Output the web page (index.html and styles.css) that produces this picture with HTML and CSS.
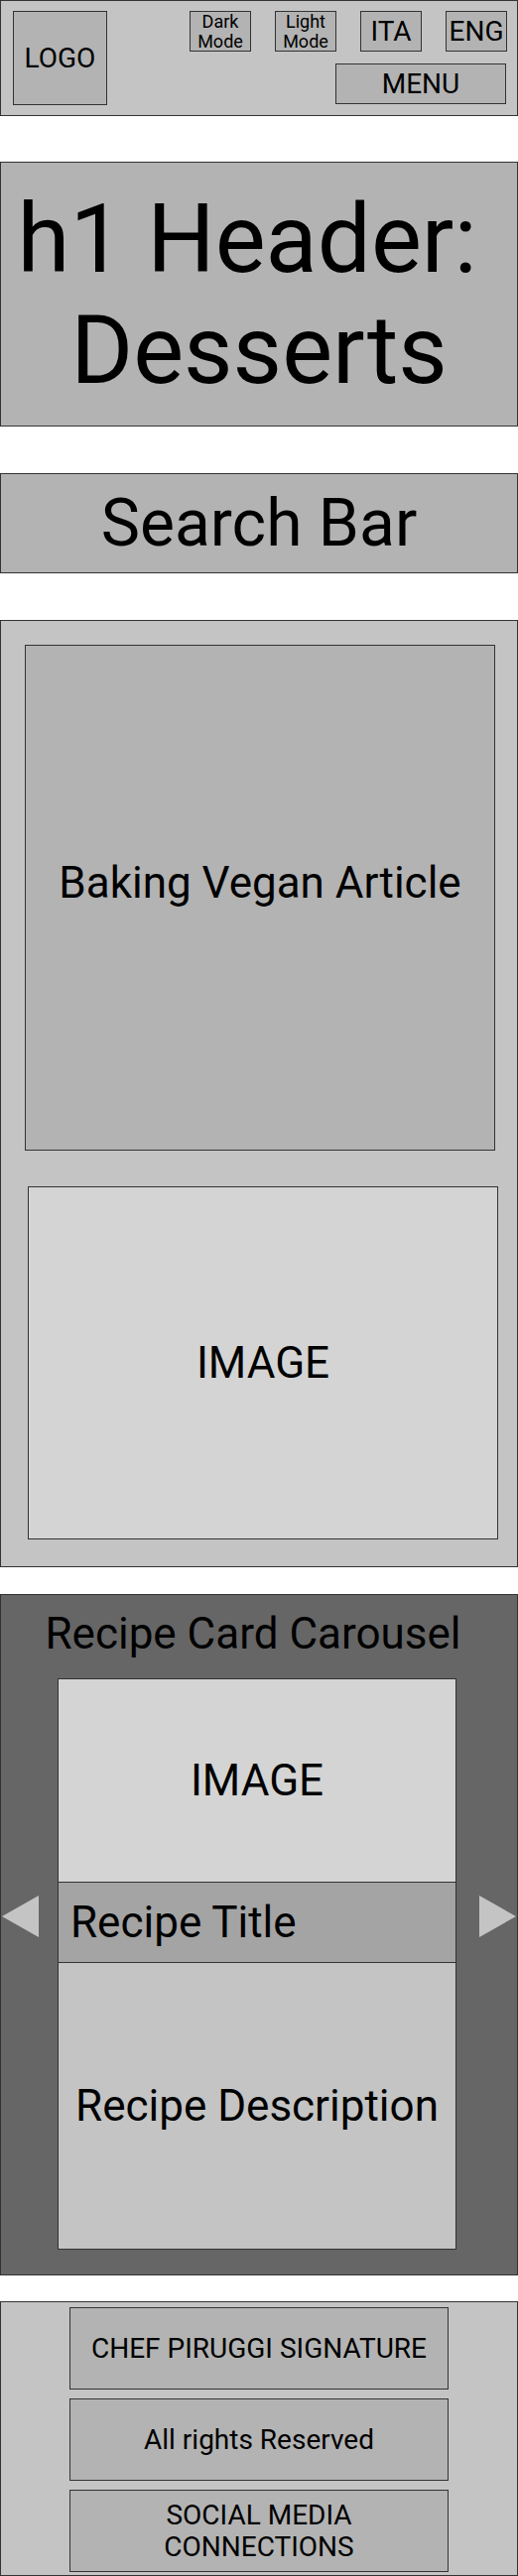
FILE: index.html
```html
<!DOCTYPE html>
<html lang="en">
    <head>
        <meta charset="UTF-8" />
        <meta name="viewport" content="width=device-width, initial-scale=1.0" />
        <title>Desserts</title>
        <link rel="stylesheet" href="styles.css">
    </head>
    <body>
        <header class="top-bar">
            <div class="logo box">LOGO</div>
            <div class="controls">
                <div class="toggles">
                    <button class="box small">Dark Mode</button>
                    <button class="box small">Light Mode</button>
                    <button class="box lang">ITA</button>
                    <button class="box lang">ENG</button>
                </div>
                <button class="box menu">MENU</button>
            </div>
        </header>

        <h1 class="page-title">h1 Header: Desserts</h1>

        <div class="search-bar">Search Bar</div>

        <section class="article">
            <div class="article-body">Baking Vegan Article</div>
            <div class="article-image">IMAGE</div>
        </section>

        <section class="carousel">
            <h2 class="carousel-title">Recipe Card Carousel</h2>
            <div class="carousel-row">
                <span class="arrow arrow-left"></span>
                <div class="recipe-card">
                    <div class="recipe-image">IMAGE</div>
                    <div class="recipe-title">Recipe Title</div>
                    <div class="recipe-desc">Recipe Description</div>
                </div>
                <span class="arrow arrow-right"></span>
            </div>
        </section>

        <footer class="footer">
            <div class="footer-item">CHEF PIRUGGI SIGNATURE</div>
            <div class="footer-item">All rights Reserved</div>
            <div class="footer-item">SOCIAL MEDIA<br />CONNECTIONS</div>
        </footer>
    </body>
</html>
```

FILE: styles.css
```css
body {
    font-family: Roboto, "Liberation Sans", Arial, sans-serif;
    margin: 0;
    width: 522px;
    color: #000;
    background-color: #fff;
}
.box {
    background-color: #b3b3b3;
    border: 1px solid #333;
    display: flex;
    justify-content: center;
    align-items: center;
    text-align: center;
    font-family: inherit;
    color: #000;
    padding: 0;
    box-sizing: border-box;
}
.top-bar {
    display: flex;
    justify-content: space-between;
    height: 117px;
    box-sizing: border-box;
    padding: 10px 10px 0 12px;
    background-color: #c4c4c4;
    border: 1px solid #333;
}
.logo {
    width: 95px;
    height: 95px;
    font-size: 28px;
}
.controls {
    display: flex;
    flex-direction: column;
    align-items: flex-end;
    gap: 12px;
}
.toggles {
    display: flex;
    gap: 24px;
}
.small {
    width: 62px;
    height: 41px;
    font-size: 18px;
    line-height: 20px;
}
.lang {
    width: 62px;
    height: 41px;
    font-size: 28px;
}
.menu {
    width: 172px;
    height: 41px;
    margin-right: 1px;
    font-size: 28px;
}
.page-title {
    margin: 46px 0 0;
    height: 267px;
    box-sizing: border-box;
    display: flex;
    align-items: center;
    justify-content: center;
    text-align: center;
    white-space: break-spaces;
    font-size: 96px;
    font-weight: normal;
    line-height: 112px;
    background-color: #b3b3b3;
    border: 1px solid #333;
}
.search-bar {
    margin-top: 47px;
    height: 101px;
    box-sizing: border-box;
    display: flex;
    align-items: center;
    justify-content: center;
    font-size: 66px;
    background-color: #b3b3b3;
    border: 1px solid #333;
}
.article {
    margin-top: 47px;
    height: 955px;
    box-sizing: border-box;
    padding: 24px 0 0 24px;
    background-color: #c4c4c4;
    border: 1px solid #333;
}
.article-body,
.article-image {
    width: 474px;
    box-sizing: border-box;
    display: flex;
    align-items: center;
    justify-content: center;
    font-size: 44px;
    border: 1px solid #333;
}
.article-body {
    height: 510px;
    padding-bottom: 30px;
    background-color: #b3b3b3;
}
.article-image {
    height: 356px;
    margin: 36px 0 0 3px;
    background-color: #d4d4d4;
}
.carousel {
    margin-top: 27px;
    height: 687px;
    box-sizing: border-box;
    padding-top: 13px;
    background-color: #666;
    border: 1px solid #333;
}
.carousel-title {
    margin: 0;
    padding-right: 12px;
    text-align: center;
    font-size: 44px;
    font-weight: normal;
    line-height: 52px;
}
.carousel-row {
    display: flex;
    align-items: flex-start;
    margin-top: 19px;
    padding: 0 1px;
}
.arrow {
    width: 0;
    height: 0;
    flex-shrink: 0;
    margin-top: 219px;
    border-top: 21px solid transparent;
    border-bottom: 21px solid transparent;
}
.arrow-left {
    border-right: 37px solid #c4c4c4;
}
.arrow-right {
    border-left: 37px solid #c4c4c4;
}
.recipe-card {
    width: 402px;
    flex-shrink: 0;
    margin: 0 23px 0 19px;
    box-sizing: border-box;
    border: 1px solid #333;
    font-size: 44px;
}
.recipe-image {
    height: 204px;
    display: flex;
    align-items: center;
    justify-content: center;
    background-color: #d4d4d4;
    border-bottom: 1px solid #333;
}
.recipe-title {
    height: 80px;
    display: flex;
    align-items: center;
    padding-left: 12px;
    background-color: #a4a4a4;
    border-bottom: 1px solid #333;
}
.recipe-desc {
    height: 288px;
    display: flex;
    align-items: center;
    justify-content: center;
    background-color: #c4c4c4;
}
.footer {
    margin-top: 26px;
    height: 277px;
    box-sizing: border-box;
    padding-top: 5px;
    display: flex;
    flex-direction: column;
    align-items: center;
    gap: 9px;
    background-color: #c4c4c4;
    border: 1px solid #333;
}
.footer-item {
    width: 382px;
    height: 83px;
    box-sizing: border-box;
    display: flex;
    align-items: center;
    justify-content: center;
    text-align: center;
    font-size: 28px;
    line-height: 32px;
    background-color: #b3b3b3;
    border: 1px solid #333;
}
```
